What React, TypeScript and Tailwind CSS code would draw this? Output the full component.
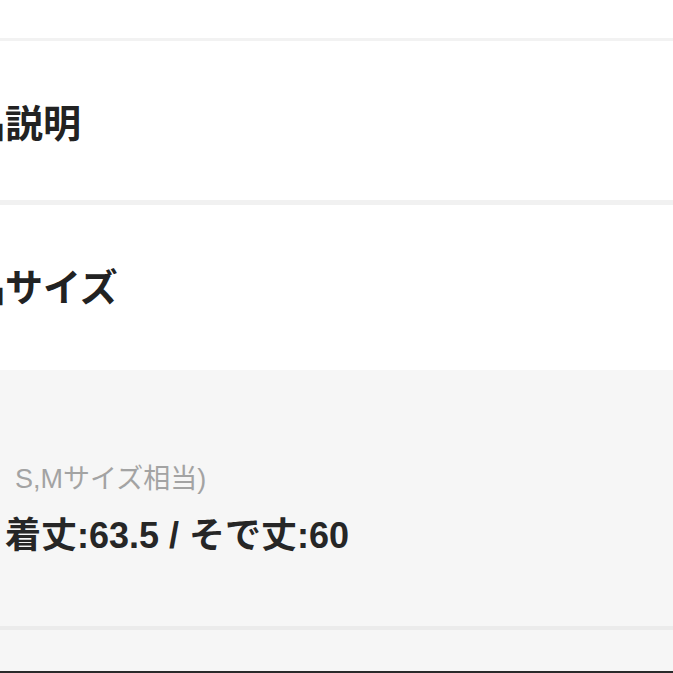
const FONT = { fontFamily: '"Liberation Sans", "Noto Sans CJK JP", sans-serif' }

function SectionTitle({ label }: { label: string }) {
  return (
    <div className="text-[38px] font-bold leading-none text-[#222] whitespace-nowrap ml-[-71px]">
      {label}
    </div>
  )
}

export default function App() {
  return (
    <div className="w-[673px] h-[673px] overflow-hidden bg-white flex flex-col" style={FONT}>
      {/* top gap */}
      <div className="h-[41px] shrink-0 border-b-[3px] border-[#f2f2f2]" />

      {/* 商品説明 */}
      <div className="h-[164px] shrink-0 flex items-center pt-[6px] border-b-[5px] border-[#f1f1f1]">
        <SectionTitle label="商品説明" />
      </div>

      {/* 商品サイズ */}
      <div className="h-[165px] shrink-0 flex items-center">
        <SectionTitle label="商品サイズ" />
      </div>

      {/* size detail */}
      <div className="flex-1 bg-[#f6f6f6] flex flex-col">
        <div className="h-[260px] shrink-0 border-b-[4px] border-[#ebebeb] pt-[96px] pl-[5px]">
          <p className="text-[27px] leading-none text-[#a3a3a3] pl-[10px] whitespace-nowrap">S,Mサイズ相当)</p>
          <p className="mt-[25px] text-[36px] font-bold leading-none text-[#262626] whitespace-nowrap">
            着丈:63.5 / そで丈:60
          </p>
        </div>
        <div className="flex-1" />
        <div className="h-[2px] bg-[#2a2a2a]" />
      </div>
    </div>
  )
}
